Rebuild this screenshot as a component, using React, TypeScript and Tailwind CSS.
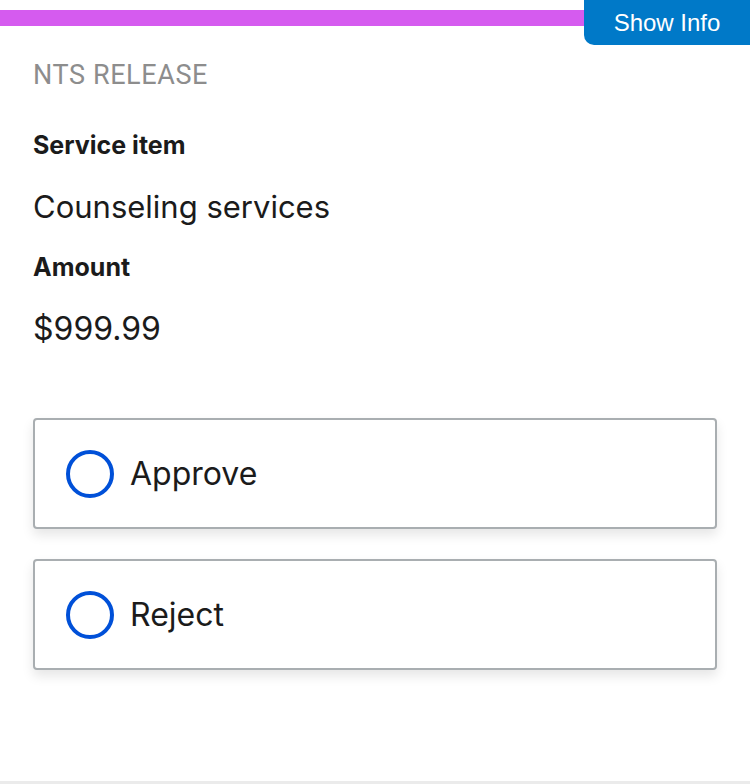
import React, { useState } from 'react';

const options = ['Approve', 'Reject'];

export default function App() {
    const [selected, setSelected] = useState<string | null>(null);

    return (
        <div className="relative w-[750px] h-[784px] bg-white overflow-hidden font-['Inter',sans-serif] text-[#1b1b1b]">
            {/* Header strip */}
            <div className="flex items-start">
                <div className="flex-1 mt-[10px] h-[16px] bg-[#d55bef]" />
                <button className="w-[166px] h-[45px] bg-[#0079c8] rounded-bl-[10px] text-white text-[24px] font-['Liberation_Sans',sans-serif] leading-[45px]">
                    Show Info
                </button>
            </div>

            <div className="px-[33px]">
                <div className="mt-[15px] text-[27px] leading-[30px] text-[#8d8d8d] font-['Roboto',sans-serif] tracking-[0.6px]">
                    NTS RELEASE
                </div>

                <div className="mt-[40px] text-[25px] leading-[30px] font-bold">Service item</div>
                <div className="mt-[27px] text-[31px] leading-[40px]">Counseling services</div>

                <div className="mt-[25px] text-[25px] leading-[30px] font-bold">Amount</div>
                <div className="mt-[27px] text-[32px] leading-[40px]">$999.99</div>

                <div className="mt-[69px] flex flex-col gap-[30px]">
                    {options.map(option => (
                        <label
                            key={option}
                            onClick={() => setSelected(option)}
                            className="h-[111px] border-2 border-[#a9aeb1] rounded-[4px] shadow-[0_6px_12px_rgba(0,0,0,0.1)] flex items-center pl-[31px] gap-[16px] cursor-pointer bg-white"
                        >
                            <span className="w-[48px] h-[48px] rounded-full border-[4px] border-[#0050d8] flex items-center justify-center">
                                {selected === option && <span className="w-[28px] h-[28px] rounded-full bg-[#0050d8]" />}
                            </span>
                            <span className="text-[32px] leading-[40px]">{option}</span>
                        </label>
                    ))}
                </div>
            </div>

            <div className="absolute left-0 right-0 bottom-0 h-[3px] bg-[#ebebeb]" />
        </div>
    );
}
